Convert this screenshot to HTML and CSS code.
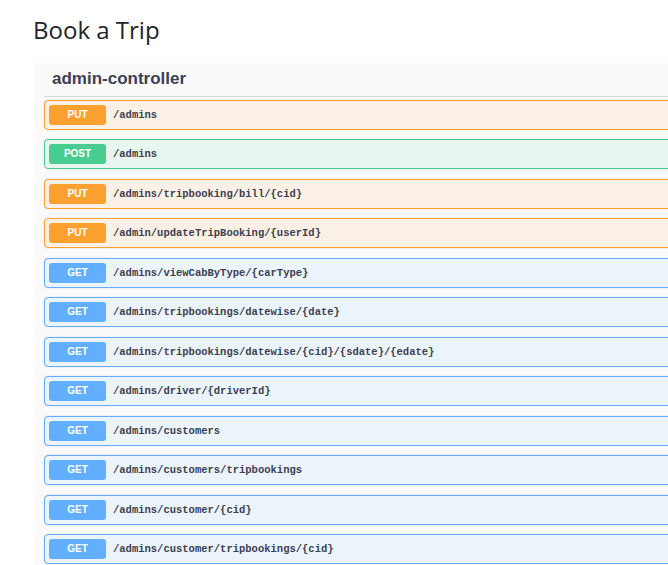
FILE: index.html
```html
<!DOCTYPE html>
<html lang="en">
<head>
<meta charset="utf-8">
<title>Book a Trip</title>
<link rel="stylesheet" href="styles.css">
</head>
<body>
<div class="page">
  <h1 class="title">Book a Trip</h1>
  <section class="panel">
    <h2 class="tag">admin-controller</h2>
    <div class="op op-put"><span class="method">PUT</span><span class="path">/admins</span></div>
    <div class="op op-post"><span class="method">POST</span><span class="path">/admins</span></div>
    <div class="op op-put"><span class="method">PUT</span><span class="path">/admins/tripbooking/bill/{cid}</span></div>
    <div class="op op-put"><span class="method">PUT</span><span class="path">/admin/updateTripBooking/{userId}</span></div>
    <div class="op op-get"><span class="method">GET</span><span class="path">/admins/viewCabByType/{carType}</span></div>
    <div class="op op-get"><span class="method">GET</span><span class="path">/admins/tripbookings/datewise/{date}</span></div>
    <div class="op op-get"><span class="method">GET</span><span class="path">/admins/tripbookings/datewise/{cid}/{sdate}/{edate}</span></div>
    <div class="op op-get"><span class="method">GET</span><span class="path">/admins/driver/{driverId}</span></div>
    <div class="op op-get"><span class="method">GET</span><span class="path">/admins/customers</span></div>
    <div class="op op-get"><span class="method">GET</span><span class="path">/admins/customers/tripbookings</span></div>
    <div class="op op-get"><span class="method">GET</span><span class="path">/admins/customer/{cid}</span></div>
    <div class="op op-get"><span class="method">GET</span><span class="path">/admins/customer/tripbookings/{cid}</span></div>
  </section>
</div>
</body>
</html>
```
FILE: styles.css
```css
html, body {
  margin: 0;
  padding: 0;
  background: #ffffff;
  overflow: hidden;
}

.page {
  padding-left: 33px;
  width: 720px;
}

.title {
  margin: 14px 0 17px 0;
  font-family: "Open Sans", "Noto Sans", sans-serif;
  font-size: 24px;
  font-weight: 400;
  line-height: 32px;
  color: #212529;
}

.panel {
  background: #fafafa;
  padding: 0 0 10px 11px;
}

.tag {
  margin: 0 0 2.5px 0;
  padding: 6px 0 7px 8px;
  font-family: "Liberation Sans", Arial, sans-serif;
  font-size: 17px;
  font-weight: 700;
  line-height: 20px;
  color: #3b4151;
  border-bottom: 1px solid #d7d9de;
}

.op {
  display: flex;
  align-items: center;
  height: 30px;
  box-sizing: border-box;
  padding: 0 4px;
  margin-bottom: 9.5px;
  border: 1px solid;
  border-radius: 4px;
  box-shadow: 0 0 2px rgba(0, 0, 0, 0.12);
}

.method {
  flex: none;
  width: 57px;
  height: 20px;
  border-radius: 3px;
  color: #ffffff;
  font-family: "Liberation Sans", Arial, sans-serif;
  font-size: 10px;
  font-weight: 700;
  line-height: 20px;
  text-align: center;
}

.path {
  margin-left: 7px;
  font-family: "Liberation Mono", "DejaVu Sans Mono", monospace;
  font-size: 10.5px;
  font-weight: 700;
  color: #3b4151;
}

.op-put {
  background: #faf0e5;
  border-color: #fca130;
}
.op-put .method { background: #fca130; }

.op-post {
  background: #e7f6ee;
  border-color: #49cc90;
}
.op-post .method { background: #49cc90; }

.op-get {
  background: #ebf3fb;
  border-color: #61affe;
}
.op-get .method { background: #61affe; }
```
